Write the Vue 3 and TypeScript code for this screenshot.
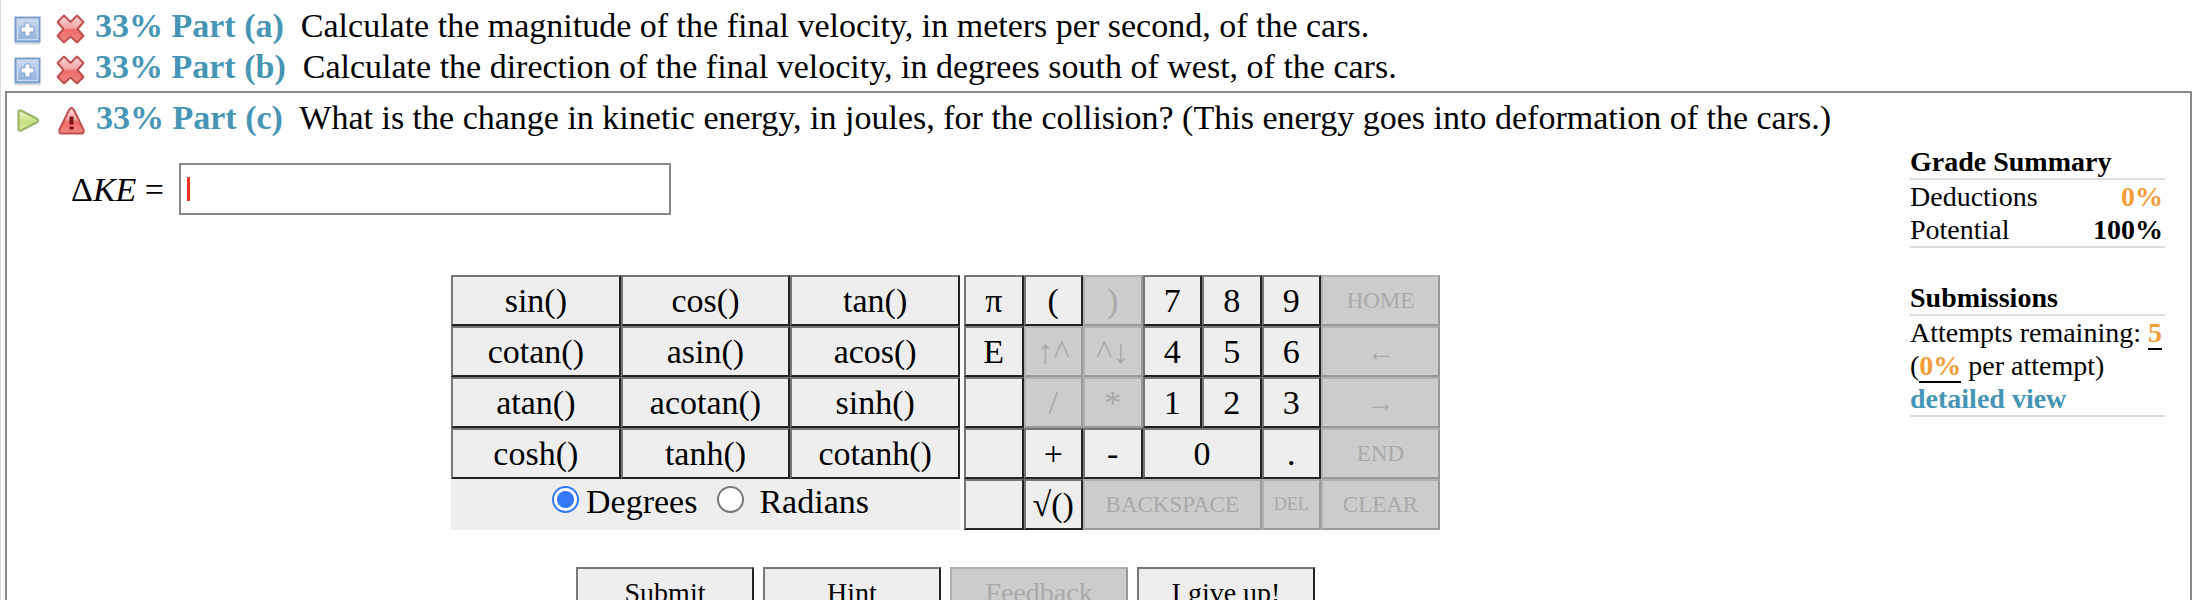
<script setup lang="ts">
import { ref } from 'vue'

interface Part {
  id: string
  text: string
}

interface Key {
  label: string
  name?: string
  disabled?: boolean
  wide?: boolean
  size?: 'word' | 'tiny' | 'arrow'
}

const finished: Part[] = [
  { id: 'a', text: 'Calculate the magnitude of the final velocity, in meters per second, of the cars.' },
  { id: 'b', text: 'Calculate the direction of the final velocity, in degrees south of west, of the cars.' },
]

const functions: string[] = [
  'sin()', 'cos()', 'tan()',
  'cotan()', 'asin()', 'acos()',
  'atan()', 'acotan()', 'sinh()',
  'cosh()', 'tanh()', 'cotanh()',
]

const keys: Key[] = [
  { label: 'π' }, { label: '(' }, { label: ')', disabled: true },
  { label: '7' }, { label: '8' }, { label: '9' },
  { label: 'HOME', disabled: true, wide: true, size: 'word' },

  { label: 'E' }, { label: '↑^', disabled: true }, { label: '^↓', disabled: true },
  { label: '4' }, { label: '5' }, { label: '6' },
  { label: '←', disabled: true, wide: true, size: 'arrow' },

  { label: '', name: 'blank' }, { label: '/', disabled: true }, { label: '*', disabled: true },
  { label: '1' }, { label: '2' }, { label: '3' },
  { label: '→', disabled: true, wide: true, size: 'arrow' },

  { label: '', name: 'blank' }, { label: '+' }, { label: '-' },
  { label: '0', wide: true }, { label: '.' },
  { label: 'END', disabled: true, wide: true, size: 'word' },

  { label: '', name: 'blank' }, { label: '√()' },
  { label: 'BACKSPACE', disabled: true, size: 'word' },
  { label: 'DEL', disabled: true, size: 'tiny' },
  { label: 'CLEAR', disabled: true, wide: true, size: 'word' },
]

const actions: Key[] = [
  { label: 'Submit' },
  { label: 'Hint' },
  { label: 'Feedback', disabled: true },
  { label: 'I give up!' },
]

const answer = ref('')
const angle = ref('degrees')

function insert(text: string) {
  answer.value += text
}
</script>

<template>
  <div class="page">
    <svg class="defs" width="0" height="0" aria-hidden="true">
      <defs>
        <linearGradient id="blue" x1="0" y1="0" x2="0" y2="1">
          <stop offset="0" stop-color="#d3e0f1" />
          <stop offset="1" stop-color="#86acd9" />
        </linearGradient>
        <linearGradient id="red" x1="0" y1="0" x2="0" y2="1">
          <stop offset="0" stop-color="#fbdada" />
          <stop offset="0.45" stop-color="#f3a5a3" />
          <stop offset="0.55" stop-color="#ee6b69" />
          <stop offset="1" stop-color="#f08784" />
        </linearGradient>
        <linearGradient id="green" x1="0" y1="0" x2="0" y2="1">
          <stop offset="0" stop-color="#e9f4cf" />
          <stop offset="0.6" stop-color="#c3e07c" />
          <stop offset="1" stop-color="#dcefb0" />
        </linearGradient>
      </defs>
    </svg>

    <div v-for="part in finished" :key="part.id" class="part">
      <svg class="icon" viewBox="0 0 32 32" aria-hidden="true">
        <path d="M4 30.500H29" stroke="#dcdcdc" stroke-width="2" />
        <rect x="4.500" y="4.500" width="24" height="24" fill="url(#blue)" stroke="#7b9cc8" stroke-width="2" />
        <rect x="6.500" y="6.500" width="20" height="20" fill="none" stroke="#c5d7ee" stroke-width="1.500" />
        <path d="M14 10h5v4h4v5h-4v4h-5v-4h-4v-5h4z" fill="#fff" stroke="#7fa3d2" stroke-width="1" />
      </svg>
      <svg class="icon" viewBox="0 0 32 32" aria-hidden="true">
        <path
          d="M2.500 9L9 2.500L15.500 9L22 2.500L28.500 9L22.500 16L28.500 23L22 29.500L15.500 23.500L9 29.500L2.500 23L8.500 16Z"
          fill="url(#red)" stroke="#c0504f" stroke-width="2" stroke-linejoin="bevel"
        />
      </svg>
      <p class="question"><a href="#">33% Part ({{ part.id }})</a>&nbsp; {{ part.text }}</p>
    </div>

    <main class="panel">
      <div class="part">
        <svg class="icon" viewBox="0 0 32 32" aria-hidden="true">
          <path
            d="M6.500 7.500Q6.500 4.500 9 5.500L24.500 13.500Q28 15.500 24.500 17.500L9 25.500Q6.500 26.500 6.500 24Z"
            fill="url(#green)" stroke="#94b262" stroke-width="2"
          />
        </svg>
        <svg class="icon" viewBox="0 0 32 32" aria-hidden="true">
          <path
            d="M13 5Q15.500 1 18 5L27.500 24.500Q28.500 28.500 25.500 28.500H5.500Q2.500 28.500 3.500 24.500Z"
            fill="url(#red)" stroke="#c0504f" stroke-width="2"
          />
          <path d="M15.500 11.500V19.500M15.500 21.500V24.500" stroke="#7c1518" stroke-width="4" />
        </svg>
        <p class="question">
          <a href="#">33% Part (c)</a>&nbsp; What is the change in kinetic energy, in joules, for the collision? (This
          energy goes into deformation of the cars.)
        </p>
      </div>

      <div class="columns">
        <section class="work">
          <div class="answer">
            <label for="answer">Δ<i>KE</i> =</label>
            <div class="field">
              <input id="answer" v-model="answer" type="text" autocomplete="off" />
              <span v-if="!answer" class="cursor"></span>
            </div>
          </div>

          <div class="keypad">
            <div class="functions">
              <button v-for="fn in functions" :key="fn" type="button" class="key" @click="insert(fn)">{{ fn }}</button>
              <div class="angles">
                <input id="deg" v-model="angle" type="radio" name="angle" value="degrees" />
                <label for="deg">Degrees</label>
                <input id="rad" v-model="angle" type="radio" name="angle" value="radians" />
                <label for="rad" class="spaced">Radians</label>
              </div>
            </div>
            <div class="numbers">
              <button
                v-for="(key, i) in keys"
                :key="i"
                type="button"
                class="key"
                :class="[key.size, { wide: key.wide, backspace: key.label === 'BACKSPACE' }]"
                :disabled="key.disabled"
                :aria-label="key.name"
                @click="insert(key.label)"
              >{{ key.label }}</button>
            </div>
          </div>

          <div class="actions">
            <button v-for="action in actions" :key="action.label" type="button" class="key action" :disabled="action.disabled">
              {{ action.label }}
            </button>
          </div>
        </section>

        <aside class="summary">
          <section>
            <h2>Grade Summary</h2>
            <dl>
              <div><dt>Deductions</dt><dd class="orange">0%</dd></div>
              <div><dt>Potential</dt><dd>100%</dd></div>
            </dl>
          </section>
          <section>
            <h2>Submissions</h2>
            <div class="attempts">
              <p>Attempts remaining: <b class="orange marked">5</b></p>
              <p>(<b class="orange marked">0%</b> per attempt)</p>
              <p><a href="#">detailed view</a></p>
            </div>
          </section>
        </aside>
      </div>
    </main>
  </div>
</template>

<style>
body {
  margin: 0;
  background: #fefefe;
}
</style>

<style scoped>
.page {
  box-sizing: border-box;
  display: flex;
  flex-direction: column;
  height: 100vh;
  overflow: hidden;
  padding: 5px 2px 0 4px;
  border-left: 1px solid #dcdcdc;
  color: #000;
  font-family: "Liberation Serif", "Times New Roman", Times, serif;
  font-size: 34px;
  line-height: 41px;
}

.defs {
  position: absolute;
}

p,
h2,
dl,
dd {
  margin: 0;
}

a {
  color: #4795b5;
  font-weight: bold;
  text-decoration: none;
}

.part {
  display: flex;
  align-items: flex-start;
  padding-left: 6px;
}

.panel .part {
  padding-left: 5px;
}

.icon {
  flex: none;
  width: 32px;
  height: 32px;
  margin: 8px 12px 0 0;
}

.icon + .icon {
  margin-right: 8px;
}

.panel {
  flex: 1 0 auto;
  margin-top: 4px;
  padding-top: 4px;
  border: 2px solid #888;
}

.columns {
  display: grid;
  grid-template-columns: minmax(0, 1fr) 255px;
  column-gap: 26px;
  padding-right: 25px;
}

.answer {
  display: flex;
  align-items: center;
  gap: 15px;
  padding: 25px 0 0 64px;
}

.field {
  position: relative;
  flex: 0 1 492px;
}

.field input {
  display: block;
  box-sizing: border-box;
  width: 100%;
  height: 52px;
  padding: 0 8px;
  border: 2px solid #888;
  border-radius: 0;
  background: #fff;
  font: inherit;
}

.cursor {
  position: absolute;
  left: 8px;
  top: 14px;
  width: 3px;
  height: 24px;
  background: #ee3524;
  pointer-events: none;
}

.keypad {
  display: flex;
  justify-content: center;
  gap: 4px;
  margin-top: 60px;
}

.functions {
  display: grid;
  grid-template-columns: repeat(3, 1fr);
  grid-auto-rows: 51px;
  width: 509px;
  background: #eee;
}

.numbers {
  display: grid;
  grid-template-columns: repeat(8, 1fr);
  grid-auto-rows: 51px;
  width: 476px;
}

.key {
  box-sizing: border-box;
  min-width: 0;
  margin: 0;
  padding: 0;
  border: 2px solid;
  border-color: #777 #222 #222 #777;
  border-radius: 0;
  background: #eee;
  color: #000;
  font: inherit;
  white-space: nowrap;
}

.key:disabled {
  border-color: #b0b0b0 #999 #999 #b0b0b0;
  background: #ccc;
  color: #aaa;
}

.wide {
  grid-column: span 2;
}

.backspace {
  grid-column: span 3;
}

.word {
  font-size: 23px;
}

.tiny {
  font-size: 18px;
}

.arrow {
  font-size: 28px;
}

.angles {
  grid-column: 1 / -1;
  display: flex;
  align-items: center;
  justify-content: center;
  padding: 0 0 10px 10px;
}

.angles input {
  appearance: none;
  box-sizing: border-box;
  width: 27px;
  height: 27px;
  margin: 0;
  border: 2px solid #777;
  border-radius: 50%;
  background: #fff;
}

.angles input:checked {
  border-color: #3478f6;
  background: radial-gradient(circle, #3478f6 8px, #fff 9px);
}

.angles label {
  margin: 0 20px 0 7px;
  padding-top: 4px;
}

.angles .spaced {
  margin: 0 0 0 15px;
}

.actions {
  display: flex;
  justify-content: center;
  gap: 9px;
  margin-top: 37px;
}

.action {
  width: 178px;
  height: 50px;
  font-size: 28px;
}

.summary {
  padding-top: 8px;
  font-size: 28px;
  line-height: 33px;
}

.summary section {
  margin-bottom: 34px;
}

h2 {
  border-bottom: 2px solid #ddd;
  font-size: 28px;
  line-height: 32px;
}

dl,
.attempts {
  border-bottom: 2px solid #ddd;
}

dl > div {
  display: flex;
  justify-content: space-between;
  padding-right: 2px;
}

dd {
  font-weight: bold;
}

.attempts p {
  white-space: nowrap;
}

.orange {
  color: #f29d38;
}

.marked {
  border-bottom: 2px solid #000;
}
</style>
